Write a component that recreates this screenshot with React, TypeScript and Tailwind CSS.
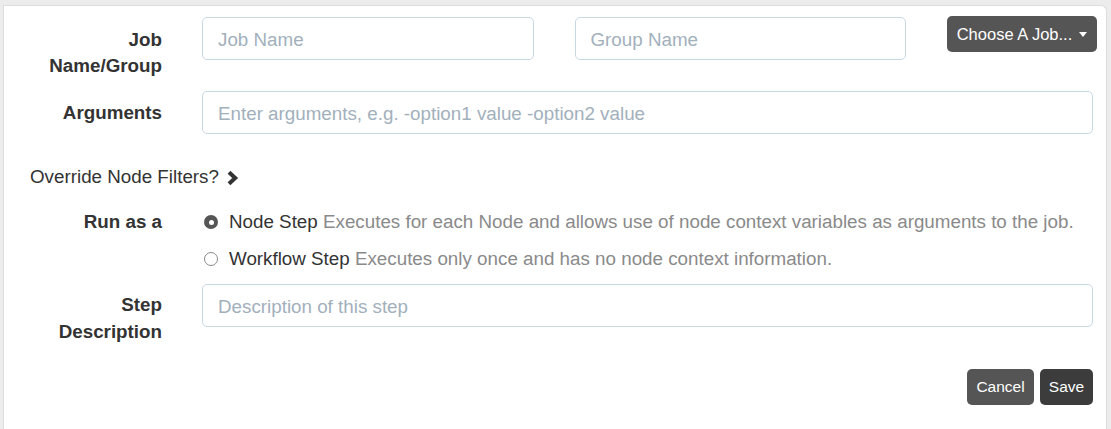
import React from "react";

const font = { fontFamily: '"Liberation Sans", Arial, Helvetica, sans-serif' };

function Radio({ checked }: { checked: boolean }) {
  return checked ? (
    <span className="w-[14px] h-[14px] rounded-full bg-[#555555] flex items-center justify-center shrink-0">
      <span className="w-[5px] h-[5px] rounded-full bg-white" />
    </span>
  ) : (
    <span className="w-[14px] h-[14px] rounded-full bg-white border border-[#8a8a8a] shrink-0" />
  );
}

function Input({ placeholder, className = "" }: { placeholder: string; className?: string }) {
  return (
    <input
      placeholder={placeholder}
      className={
        "h-[43px] rounded-[5px] border border-[#c9d9e3] bg-white px-[15px] pt-[3px] text-[18.8px] text-[#333] placeholder:text-[#a2b0bc] outline-none " +
        className
      }
      style={font}
    />
  );
}

export default function App() {
  return (
    <div className="min-h-screen bg-[#ececec] pl-[3px] pt-[5px] pr-[4px] text-[18.8px] text-[#333]" style={font}>
      <div className="bg-white border border-b-0 border-[#dddddd] rounded-tr-[6px] min-h-[424px] pr-[13px] pt-[11px]">
        {/* Row 1 */}
        <div className="grid grid-cols-[158px_1fr] gap-x-[40px] items-start">
          <div className="pt-[10px] leading-[26px] text-right font-bold">
            Job
            <br />
            Name/Group
          </div>
          <div className="flex items-start gap-[41px] mr-[-4px]">
            <Input placeholder="Job Name" className="flex-1 min-w-0" />
            <Input placeholder="Group Name" className="flex-1 min-w-0" />
            <button className="mt-[-1px] w-[150px] h-[36px] shrink-0 rounded-[5px] bg-[#555555] text-white text-[16.5px] flex items-center justify-center gap-[7px]">
              <span>Choose A Job...</span>
              <span className="w-0 h-0 border-l-[4px] border-r-[4px] border-t-[5px] border-l-transparent border-r-transparent border-t-white" />
            </button>
          </div>
        </div>

        {/* Row 2 */}
        <div className="grid grid-cols-[158px_1fr] gap-x-[40px] items-start mt-[12px]">
          <div className="pt-[9px] leading-[26px] text-right font-bold">Arguments</div>
          <Input placeholder="Enter arguments, e.g. -option1 value -option2 value" className="w-full" />
        </div>

        {/* Row 3 */}
        <div className="mt-[30px] pl-[26px] leading-[26px] flex items-center gap-[7px]">
          <span>Override Node Filters?</span>
          <svg width="13" height="16" viewBox="0 0 13 16" className="mt-[1px]">
            <polyline points="3,2.2 9.2,8 3,13.8" fill="none" stroke="#333" strokeWidth="4" strokeLinejoin="miter" />
          </svg>
        </div>

        {/* Row 4 */}
        <div className="grid grid-cols-[158px_1fr] gap-x-[40px] items-start mt-[19px]">
          <div className="leading-[26px] text-right font-bold">Run as a</div>
          <div className="flex flex-col gap-[11px] pl-[2px]">
            <label className="flex items-center gap-[11px] leading-[26px]">
              <Radio checked />
              <span>
                Node Step{" "}
                <span className="text-[#8a8a8a]">
                  Executes for each Node and allows use of node context variables as arguments to the job.
                </span>
              </span>
            </label>
            <label className="flex items-center gap-[11px] leading-[26px]">
              <Radio checked={false} />
              <span>
                Workflow Step{" "}
                <span className="text-[#8a8a8a]">Executes only once and has no node context information.</span>
              </span>
            </label>
          </div>
        </div>

        {/* Row 5 */}
        <div className="grid grid-cols-[158px_1fr] gap-x-[40px] items-start mt-[12px]">
          <div className="pt-[8px] leading-[26.5px] text-right font-bold">
            Step
            <br />
            Description
          </div>
          <Input placeholder="Description of this step" className="w-full" />
        </div>

        {/* Buttons */}
        <div className="mt-[24px] flex justify-end gap-[6px]">
          <button className="h-[36px] w-[67px] rounded-[5px] bg-[#555555] text-white text-[15.5px]">Cancel</button>
          <button className="h-[36px] w-[53px] rounded-[5px] bg-[#3c3c3c] text-white text-[15.5px]">Save</button>
        </div>
      </div>
    </div>
  );
}
